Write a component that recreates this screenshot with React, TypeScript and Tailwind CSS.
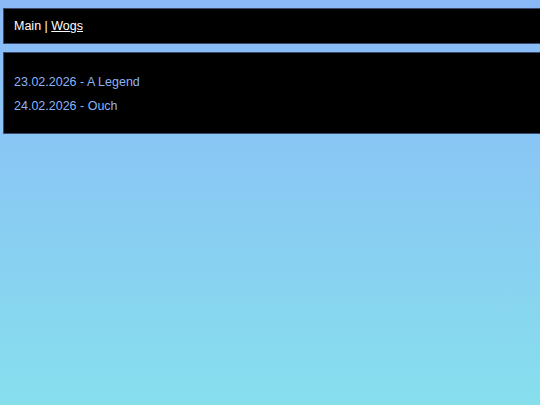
export default function App() {
  return (
    <div className="h-[405px] w-full overflow-hidden bg-gradient-to-b from-[#8ab8f8] to-[#87dfed] pt-2 pl-[3px] font-['Liberation_Sans',Arial,sans-serif] text-[12.5px] leading-[1.15]">
      {/* Nav bar */}
      <nav className="w-[560px] border border-[#3b4a6b] bg-black p-[10px] text-white">
        Main | <a className="underline">Wogs</a>
      </nav>

      {/* Post list */}
      <div className="mt-2 flex w-[560px] flex-col gap-[9.6px] border border-[#3b4a6b] bg-black px-[10px] pt-[22px] pb-[19px] text-[#8ab4f8]">
        <a>23.02.2026 - A Legend</a>
        <a>24.02.2026 - Ouch</a>
      </div>
    </div>
  );
}
